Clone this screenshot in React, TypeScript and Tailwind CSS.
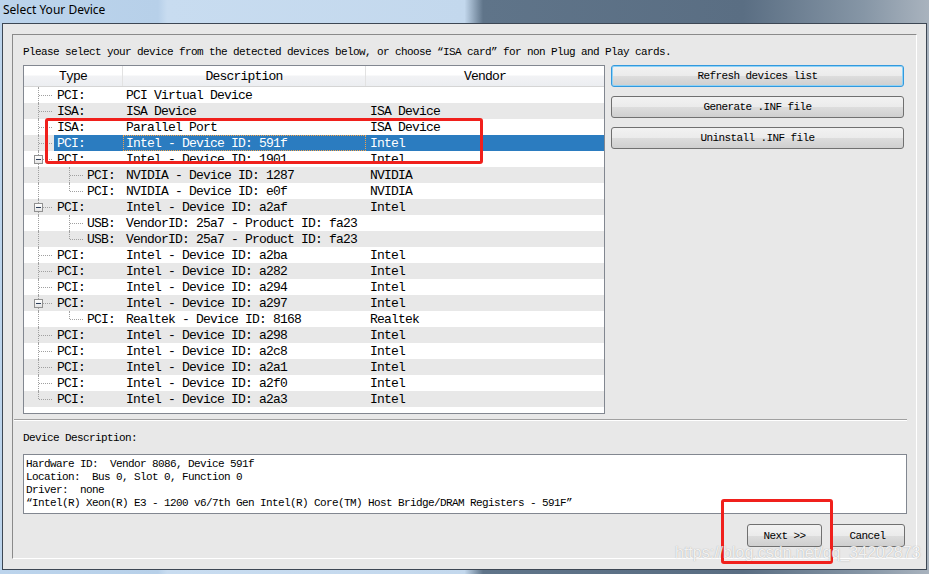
type Row = {
  t: string;
  d: string;
  v: string;
  lvl: 0 | 1;
  exp?: boolean;
  last?: boolean;
  lastRoot?: boolean;
  sel?: boolean;
};

const rows: Row[] = [
  { t: "PCI:", d: "PCI Virtual Device", v: "", lvl: 0 },
  { t: "ISA:", d: "ISA Device", v: "ISA Device", lvl: 0 },
  { t: "ISA:", d: "Parallel Port", v: "ISA Device", lvl: 0 },
  { t: "PCI:", d: "Intel - Device ID: 591f", v: "Intel", lvl: 0, sel: true },
  { t: "PCI:", d: "Intel - Device ID: 1901", v: "Intel", lvl: 0, exp: true },
  { t: "PCI:", d: "NVIDIA - Device ID: 1287", v: "NVIDIA", lvl: 1 },
  { t: "PCI:", d: "NVIDIA - Device ID: e0f", v: "NVIDIA", lvl: 1, last: true },
  { t: "PCI:", d: "Intel - Device ID: a2af", v: "Intel", lvl: 0, exp: true },
  { t: "USB:", d: "VendorID: 25a7 - Product ID: fa23", v: "", lvl: 1 },
  { t: "USB:", d: "VendorID: 25a7 - Product ID: fa23", v: "", lvl: 1, last: true },
  { t: "PCI:", d: "Intel - Device ID: a2ba", v: "Intel", lvl: 0 },
  { t: "PCI:", d: "Intel - Device ID: a282", v: "Intel", lvl: 0 },
  { t: "PCI:", d: "Intel - Device ID: a294", v: "Intel", lvl: 0 },
  { t: "PCI:", d: "Intel - Device ID: a297", v: "Intel", lvl: 0, exp: true },
  { t: "PCI:", d: "Realtek - Device ID: 8168", v: "Realtek", lvl: 1, last: true },
  { t: "PCI:", d: "Intel - Device ID: a298", v: "Intel", lvl: 0 },
  { t: "PCI:", d: "Intel - Device ID: a2c8", v: "Intel", lvl: 0 },
  { t: "PCI:", d: "Intel - Device ID: a2a1", v: "Intel", lvl: 0 },
  { t: "PCI:", d: "Intel - Device ID: a2f0", v: "Intel", lvl: 0 },
  { t: "PCI:", d: "Intel - Device ID: a2a3", v: "Intel", lvl: 0, lastRoot: true },
];

const small = "font-['Liberation_Mono',monospace] text-[11px] tracking-[-0.6px]";
const big = "font-['Liberation_Mono',monospace] text-[13px] tracking-[-0.8px]";
const btn =
  "flex items-center justify-center rounded-[3px] border bg-[linear-gradient(#f2f2f2_0%,#ebebeb_50%,#dddddd_51%,#cfcfcf_100%)] pt-[1px] text-black";

const TreeRow = ({ r, i }: { r: Row; i: number }) => {
  const dots = "absolute border-dotted border-[#a0a0a0]";
  return (
    <div className={`flex h-[16px] leading-[18px] ${i % 2 ? "bg-[#e8e8e8]" : "bg-white"}`}>
      <div className={`relative flex h-full w-[99px] shrink-0 ${r.sel ? "pl-[30px]" : r.lvl ? "pl-[63px]" : "pl-[33px]"}`}>
        <span className={`${dots} left-[14px] top-0 border-l ${r.lastRoot ? "h-[8px]" : "h-full"}`} />
        {r.lvl === 0 && <span className={`${dots} left-[15px] top-[8px] w-[13px] border-t`} />}
        {r.lvl === 1 && (
          <>
            <span className={`${dots} left-[45px] top-0 border-l ${r.last ? "h-[8px]" : "h-full"}`} />
            <span className={`${dots} left-[46px] top-[8px] w-[13px] border-t`} />
          </>
        )}
        {r.exp && (
          <span className="absolute left-[10px] top-[4px] flex h-[9px] w-[9px] items-center justify-center border border-[#919191] bg-[linear-gradient(#ffffff,#e4e4e4)]">
            <span className="h-[1px] w-[5px] bg-[#2c3e5a]" />
          </span>
        )}
        {r.sel ? (
          <span className="flex-1 bg-[#2b7cc0] pl-[3px] text-white">{r.t}</span>
        ) : (
          <span>{r.t}</span>
        )}
      </div>
      <div
        className={`relative w-[243px] shrink-0 overflow-hidden whitespace-nowrap pl-[3px] ${
          r.sel ? "bg-[#2b7cc0] text-white" : ""
        }`}
      >
        {r.d}
        {r.sel && <span className="absolute inset-0 border border-dotted border-[#f5a34a]" />}
      </div>
      <div className={`flex-1 overflow-hidden whitespace-nowrap pl-[4px] ${r.sel ? "bg-[#2b7cc0] text-white" : ""}`}>
        {r.v}
      </div>
    </div>
  );
};

const App = () => {
  return (
    <div className="relative flex h-[574px] w-[929px] flex-col overflow-hidden bg-[linear-gradient(90deg,#bcd4ec_0%,#b7d0e9_17%,#c8dcf0_18%,#c3d8ed_50%,#5f7489_52%,#5a6e83_80%,#8696a6_93%,#a9b3be_100%)] text-black">
      {/* title bar */}
      <div className="h-[23px] shrink-0 pl-[3px] font-['Noto_Sans',sans-serif] text-[12px] leading-[20px] text-black">
        Select Your Device
      </div>

      {/* window body */}
      <div className="mx-[2px] h-[547px] shrink-0 border border-[#3d4754] bg-[#e8e8e8] px-[9px] pt-[10px] pb-[10px]">
        <div className={`flex h-[525px] flex-col border-t border-l border-[#8a8a8a] border-r border-r-white border-b border-b-white pt-[8px] pr-[11px] pl-[10px] ${small}`}>
          <p className="h-[16px] leading-[18px]">
            Please select your device from the detected devices below, or choose “ISA card” for non Plug and Play cards.
          </p>

          <div className="mt-[6px] flex h-[349px] gap-[6px]">
            {/* device tree list */}
            <div className={`flex w-[582px] flex-col border border-[#828790] bg-white ${big}`}>
              <div className="flex h-[21px] shrink-0 border-b border-[#d5d5d5] bg-[linear-gradient(#ffffff_0%,#ffffff_45%,#f2f3f5_50%,#eceef1_100%)] leading-[22px]">
                <div className="w-[99px] border-r border-[#e2e2e2] text-center">Type</div>
                <div className="w-[243px] border-r border-[#e2e2e2] text-center">Description</div>
                <div className="flex-1 text-center">Vendor</div>
              </div>
              {rows.map((r, i) => (
                <TreeRow key={i} r={r} i={i} />
              ))}
            </div>

            {/* side buttons */}
            <div className="flex w-[293px] flex-col gap-[9px]">
              <button className={`${btn} h-[22px] border-[#3399dd] shadow-[inset_0_0_0_1px_#8fd3f7]`}>Refresh devices list</button>
              <button className={`${btn} h-[22px] border-[#707070]`}>Generate .INF file</button>
              <button className={`${btn} h-[22px] border-[#707070]`}>Uninstall .INF file</button>
            </div>
          </div>

          <div className="mt-[5px] -ml-[9px] h-[2px] w-[893px] border-t border-[#a0a0a0] border-b border-b-white" />

          <p className="mt-[8px] h-[16px] leading-[18px]">Device Description:</p>

          <div className="mt-[9px] h-[60px] w-[884px] border border-[#828790] bg-white pt-[3px] pl-[2px] leading-[13px] whitespace-pre">
            <div>Hardware ID:  Vendor 8086, Device 591f</div>
            <div>Location:  Bus 0, Slot 0, Function 0</div>
            <div>Driver:  none</div>
            <div>“Intel(R) Xeon(R) E3 - 1200 v6/7th Gen Intel(R) Core(TM) Host Bridge/DRAM Registers - 591F”</div>
          </div>

          <div className="mt-[10px] flex justify-end gap-[8px]">
            <button className={`${btn} h-[23px] w-[75px] border-[#707070]`}>Next &gt;&gt;</button>
            <button className={`${btn} h-[23px] w-[75px] border-[#707070]`}>Cancel</button>
          </div>
        </div>
      </div>

      {/* red annotation boxes */}
      <div className="absolute top-[118px] left-[45px] h-[46px] w-[438px] rounded-[3px] border-[3px] border-[#f0201c]" />
      <div className="absolute top-[499px] left-[721px] h-[65px] w-[112px] rounded-[3px] border-[3px] border-[#f0201c]" />

      {/* watermark */}
      <div className="absolute top-[544px] left-[675px] font-['Liberation_Sans',sans-serif] text-[16px] leading-[18px] text-white/85 [text-shadow:0_0_1px_rgba(120,120,120,0.7)]">
        https://blog.csdn.net/qq_34202873
      </div>
    </div>
  );
};

export default App;
